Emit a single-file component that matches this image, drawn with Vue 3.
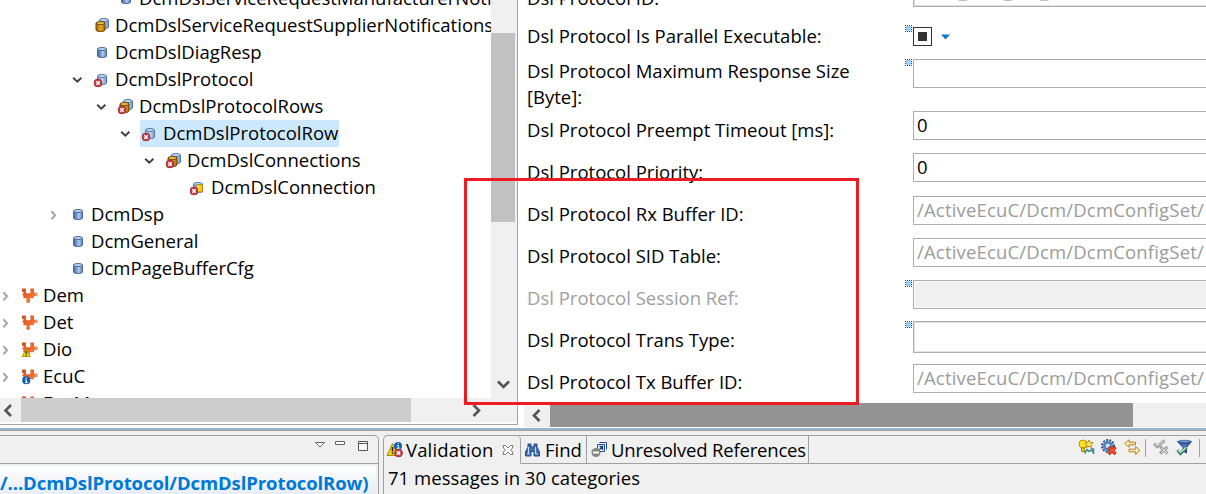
<script setup>
const tree = [
  { t: 139, icon: 'cyl', text: 'DcmDslServiceRequestManufacturerNotification' },
  { t: 115, icon: 'multi', text: 'DcmDslServiceRequestSupplierNotifications' },
  { t: 115, icon: 'cyl', text: 'DcmDslDiagResp' },
  { t: 115, icon: 'cyl-err', text: 'DcmDslProtocol', arrow: 'open' },
  { t: 139, icon: 'multi-err', text: 'DcmDslProtocolRows', arrow: 'open' },
  { t: 163, icon: 'cyl-err', text: 'DcmDslProtocolRow', arrow: 'open', sel: true },
  { t: 187, icon: 'multi-err', text: 'DcmDslConnections', arrow: 'open' },
  { t: 211, icon: 'choice-err', text: 'DcmDslConnection' },
  { t: 91, icon: 'cyl', text: 'DcmDsp', arrow: 'closed' },
  { t: 91, icon: 'cyl', text: 'DcmGeneral' },
  { t: 91, icon: 'cyl', text: 'DcmPageBufferCfg' },
  { t: 43, icon: 'puzzle', text: 'Dem', arrow: 'closed' },
  { t: 43, icon: 'puzzle', text: 'Det', arrow: 'closed' },
  { t: 43, icon: 'puzzle-warn', text: 'Dio', arrow: 'closed' },
  { t: 43, icon: 'puzzle-info', text: 'EcuC', arrow: 'closed' },
  { t: 43, icon: 'puzzle', text: 'EcuM', arrow: 'closed' },
]
const path = '/ActiveEcuC/Dcm/DcmConfigSet/'
const fields = [
  { label: 'Dsl Protocol ID:', kind: 'first combo', value: 'DCM_UDS_ON_CAN' },
  { label: 'Dsl Protocol Is Parallel Executable:', kind: 'check', mark: true },
  { label: 'Dsl Protocol Maximum Response Size [Byte]:', kind: 'tall', value: '', mark: true },
  { label: 'Dsl Protocol Preempt Timeout [ms]:', kind: 'plain', value: '0' },
  { label: 'Dsl Protocol Priority:', kind: 'plain', value: '0' },
  { label: 'Dsl Protocol Rx Buffer ID:', kind: 'ref', value: path },
  { label: 'Dsl Protocol SID Table:', kind: 'ref', value: path },
  { label: 'Dsl Protocol Session Ref:', kind: 'off', value: '', mark: true },
  { label: 'Dsl Protocol Trans Type:', kind: 'combo', value: '', mark: true },
  { label: 'Dsl Protocol Tx Buffer ID:', kind: 'ref', value: path },
]
</script>

<template>
  <div class="window">
    <svg class="defs" width="0" height="0">
      <defs>
        <linearGradient id="gb"><stop offset="0" stop-color="#3d619f" /><stop offset=".3" stop-color="#6f93c8" /><stop offset=".6" stop-color="#b4cdee" /><stop offset="1" stop-color="#5478b2" /></linearGradient>
        <linearGradient id="gl"><stop offset="0" stop-color="#7f9dcb" /><stop offset=".5" stop-color="#c3d7f1" /><stop offset="1" stop-color="#7896c6" /></linearGradient>
        <linearGradient id="gg"><stop offset="0" stop-color="#9a6404" /><stop offset=".5" stop-color="#e0a62c" /><stop offset="1" stop-color="#a87008" /></linearGradient>
        <linearGradient id="gp" x2="1" y2="1"><stop offset="0" stop-color="#c85426" /><stop offset=".45" stop-color="#ef6428" /><stop offset="1" stop-color="#e6a060" /></linearGradient>
        <linearGradient id="gf" x2="0" y2="1"><stop offset="0" stop-color="#1c3f87" /><stop offset=".5" stop-color="#5f8fd0" /><stop offset="1" stop-color="#24509c" /></linearGradient>
      </defs>
      <symbol id="body-blue" viewBox="0 0 10 11"><path d="M.5 2v7q0 1.500 4.500 1.500T9.500 9V2z" fill="url(#gb)" stroke="#486798" /><ellipse cx="5" cy="2" rx="4.500" ry="1.500" fill="#c4d6ee" stroke="#486798" /></symbol>
      <symbol id="body-light" viewBox="0 0 10 11"><path d="M.5 2v7q0 1.500 4.500 1.500T9.500 9V2z" fill="url(#gl)" stroke="#5673a8" /><ellipse cx="5" cy="2" rx="4.500" ry="1.500" fill="#bfe0f4" stroke="#5673a8" /></symbol>
      <symbol id="body-gold" viewBox="0 0 10 11"><path d="M.5 2v7q0 1.500 4.500 1.500T9.500 9V2z" fill="url(#gg)" stroke="#744600" /><ellipse cx="5" cy="2" rx="4.500" ry="1.500" fill="#efc25a" stroke="#744600" /></symbol>
      <symbol id="err" viewBox="0 0 9 9"><circle cx="4.500" cy="4.500" r="4" fill="#c24045" stroke="#a02c34" stroke-width=".8" /><path d="M2.800 2.800l3.400 3.400M6.200 2.800L2.800 6.200" stroke="#fff" stroke-width="1.500" /></symbol>
      <symbol id="cyl" viewBox="0 0 18 19"><use href="#body-blue" x="5" y="4" width="10" height="11" /></symbol>
      <symbol id="cyl-err" viewBox="0 0 18 19"><use href="#body-light" x="5" y="4" width="10" height="11" /><use href="#err" x="1.500" y="8.500" width="9" height="9" /></symbol>
      <symbol id="multi" viewBox="0 0 18 19"><use href="#body-light" x="7" y="2" width="10" height="11" /><use href="#body-gold" x="3" y="5" width="11" height="11" /></symbol>
      <symbol id="multi-err" viewBox="0 0 18 19"><use href="#multi" width="18" height="19" /><use href="#err" x="1.500" y="8.500" width="9" height="9" /></symbol>
      <symbol id="choice-err" viewBox="0 0 18 19"><use href="#body-light" x="5" y="4" width="10" height="11" /><path d="M9 6.500h5.500V14H9z" fill="#fbc90c" stroke="#b68a20" /><path d="M10 7v6" stroke="#fff2a0" /><use href="#err" x="1.500" y="8.500" width="9" height="9" /></symbol>
      <symbol id="puzzle" viewBox="0 0 18 19"><path d="M2 2.500h4v2.800q-.8 1.500.8 1.900h3q1.400-.4.600-1.900V2.500H14v4.300h1.200a1.800 1.800 0 1 1 0 3.200H14v2.200h-4.200v1.500a2 2 0 1 1-3.200 0v-1.500H3.400V9.500L2 8.500l2-1.800-2-.9z" fill="url(#gp)" /><circle cx="16.200" cy="8.400" r="1" fill="#f6bc7d" /></symbol>
      <symbol id="puzzle-warn" viewBox="0 0 18 19"><use href="#puzzle" width="18" height="19" /><path d="M6.200 9l4 7.500H2.200z" fill="#f8dc0a" stroke="#b99b00" /><path d="M6.200 11v2.800M6.200 14.500v1.200" stroke="#222" stroke-width="1.300" /></symbol>
      <symbol id="puzzle-info" viewBox="0 0 18 19"><use href="#puzzle" width="18" height="19" /><circle cx="6.200" cy="13.200" r="4" fill="#0c62b8" /><path d="M6.200 10.500v1.300M5 13h1.500v2.500M5 15.600h2.800" stroke="#fff" fill="none" /></symbol>
    </svg>

    <main class="upper">
      <section class="left">
        <div class="treerow">
          <div class="tree">
            <div v-for="(n, i) in tree" :key="i" class="node" :style="{ marginLeft: n.t - 46 + 'px' }">
              <svg class="arrow" width="16" height="16">
                <path v-if="n.arrow === 'open'" d="M4.200 5.700L8.300 9.600l4.100-3.900" class="open" />
                <path v-if="n.arrow === 'closed'" d="M6.400 4.200l3.700 4-3.700 4" class="closed" />
              </svg>
              <span class="item" :class="{ sel: n.sel }"><svg width="18" height="19"><use :href="'#' + n.icon" /></svg><span class="name">{{ n.text }}</span></span>
            </div>
          </div>
          <div class="vscroll">
            <div class="vthumb"></div>
            <svg width="24" height="28"><path d="M7 11.500l5.500 5.500 5.500-5.500" class="chev" /></svg>
          </div>
        </div>
        <div class="hscroll">
          <svg width="21" height="24"><path d="M11 7l-5.500 5.500 5.500 5.500" class="chev" /></svg>
          <div class="hthumb"></div>
          <svg class="toright" width="24" height="24"><path d="M7.500 7l5.500 5.500L7.500 18" class="chev" /></svg>
        </div>
      </section>

      <section class="right">
        <div class="form">
          <div v-for="(f, i) in fields" :key="i" class="field" :class="f.kind">
            <label>{{ f.label }}</label>
            <svg class="mark" width="8" height="8"><g v-if="f.mark"><path fill="#9ccff8" d="M1 1h5v5H1z" /><path fill="none" stroke="#0b4b91" stroke-dasharray="1 1" d="M0 .5h7M0 6.500h7M.5 0v7M6.500 0v7" /></g></svg>
            <div v-if="f.kind === 'check'" class="checkwrap">
              <span class="box"></span>
              <svg width="9" height="6"><path d="M0 .5h9L4.500 5.500z" fill="#0b78d4" /></svg>
            </div>
            <div v-else class="input">{{ f.value }}</div>
          </div>
        </div>
        <div class="formscroll">
          <svg width="26" height="24"><path d="M15.500 7L10 12.500l5.500 5.500" class="chev" /></svg>
          <div class="formthumb"></div>
        </div>
      </section>
      <div class="callout"></div>
    </main>

    <footer class="lower">
      <section class="view outline">
        <div class="bar">
          <svg width="56" height="20">
            <path d="M1.500 3.500h9L6 8z" fill="#fff" stroke="#666" />
            <path d="M21.500 2.500h9v3h-9z" fill="#fff" stroke="#666" />
            <path d="M44.500 2.500h9v9h-9zM44 4.500h10" fill="#fff" stroke="#555" />
          </svg>
        </div>
        <div class="crumb"><span class="crumbtext">/...DcmDslProtocol/DcmDslProtocolRow)</span></div>
      </section>
      <section class="view problems">
        <div class="tabs">
          <div class="tab active">
            <svg width="18" height="18"><path d="M6.500 2.500L12 14.500H1z" fill="#f9d616" stroke="#a98800" /><path d="M6.500 6v4.500M6.500 11.500v1.500" stroke="#222" stroke-width="1.600" /><circle cx="12" cy="5" r="4" fill="#0c62b8" /><path d="M12 2v1.200M11 4.500h1.300v2.800M10.700 7.300h3" stroke="#fff" fill="none" /><use href="#err" x="8" y="7.500" width="9" height="9" /></svg>
            <span class="t1">Validation</span>
            <svg class="close" width="12" height="12"><path d="M1 1.500h2.500L6 4l2.500-2.500H11L10.500 4l-2 2 2 2 .5 2.500H8.500L6 8l-2.500 2.500H1L1.500 8l2-2-2-2z" fill="#fff" stroke="#777" /></svg>
          </div>
          <div class="tab find">
            <svg width="16" height="16"><path d="M3 2h3v3h3V2h3v3l2.500 5v4H9V9.500H6V14H.5v-4L3 5z" fill="#3e68ad" stroke="#294d8b" /><path d="M3.500 5v7M10.500 5v7M2 12h2.500M10.500 12H13" stroke="#c6dcf5" stroke-width="1.200" /></svg>
            <span class="t2">Find</span>
          </div>
          <div class="tab unres">
            <svg width="17" height="17"><path d="M8.500 1.500h7v7" fill="none" stroke="#1d4ca0" /><path d="M6.500 3.500h7v7h-7z" fill="#f5faff" stroke="#1d4ca0" /><path d="M8 9l3.500-3.500M8.500 5.500h3V9" fill="none" stroke="#163c92" stroke-width="1.300" /><circle cx="5" cy="11.500" r="4.500" fill="#858585" /><path d="M2 11.500h6" stroke="#fff" stroke-width="2" /></svg>
            <span class="t3">Unresolved References</span>
          </div>
          <div class="tools">
            <svg width="17" height="17"><circle cx="5" cy="5" r="4" fill="#ffe11c" stroke="#c09500" /><path d="M3.500 9h3v3.500h-3z" fill="#f2cf45" stroke="#a57d00" /><path d="M11 1l1.200 2.500 2.800.3-2 2 .5 2.700-2.500-1.300L8.500 8.500 9 6 7 4l2.800-.5z" fill="#fbe77a" stroke="#b98b00" /><path d="M6.500 14.500L9 10.500l2 2q4-3 4.500 2.500v-5h-3" fill="none" stroke="#388c88" stroke-width="1.500" /></svg>
            <svg width="17" height="17"><circle cx="7" cy="7" r="6" fill="none" stroke="#31568e" stroke-width="2" stroke-dasharray="2 1.200" /><circle cx="7" cy="7" r="3.700" fill="#d6e7fa" stroke="#5a86bf" stroke-width="3" /><path d="M7.500 8l7 7M14.500 8l-7 7" stroke="#9e1f08" stroke-width="3.400" /><path d="M8 8.500l6 6M14 8.500l-6 6" stroke="#ff5428" stroke-width="1.900" /></svg>
            <svg width="17" height="17"><path d="M.7 4.500L5 .8v2.400h6.500v2.600H5v2.400z" fill="#fff3c4" stroke="#bd7b13" /><path d="M16 11.500l-4.300-3.800v2.500H5v2.600h6.700v2.500z" fill="#fff3c4" stroke="#bd7b13" /></svg>
            <i class="sep"></i>
            <svg class="gray" width="17" height="17"><path d="M1 4.500l3 3 7.500-6" fill="none" stroke="#999" stroke-width="3" /><path d="M1.500 4.700l2.500 2L10.500 2" fill="none" stroke="#eee" /><path d="M7 7.500l7.500 7M14.500 8l-7.500 6.500" stroke="#999" stroke-width="3" /><path d="M8 8.500l6 5.500M14 8.500L8 14" stroke="#eee" /></svg>
            <svg class="filter" width="17" height="17"><path d="M1.500 2.500h14L10.500 8.500V14L7 12V8.500z" fill="url(#gf)" stroke="#234681" /><ellipse cx="8.500" cy="2.500" rx="6.500" ry="1.200" fill="#7fa5da" stroke="#234681" stroke-width=".7" /><path d="M1.500 11l3 3.500 6-6" fill="none" stroke="#357b62" stroke-width="3" /><path d="M2 11l2.500 2.500L10 8.500" fill="none" stroke="#c9eed7" stroke-width="1.200" /></svg>
            <i class="sep last"></i>
          </div>
        </div>
        <div class="summary">71 messages in 30 categories</div>
      </section>
    </footer>
  </div>
</template>

<style>
body { margin: 0; overflow: hidden; }
</style>

<style scoped>
* { box-sizing: border-box; }
.window { width: 1206px; height: 494px; overflow: hidden; background: #f0f0f0; font-family: "Open Sans", "Noto Sans", sans-serif; font-size: 18.500px; color: #000; white-space: nowrap; }
.defs { position: absolute; }
svg { flex: none; display: block; }
.chev { fill: none; stroke: #555; stroke-width: 2.600; }
.upper { position: relative; height: 431px; display: flex; background: #fff; border-bottom: 1px solid #a0a0a0; box-shadow: inset 0 -2px #99b4d1; }
.left { width: 518px; height: 425px; flex: none; border-right: 1px solid #a4a5ab; border-bottom: 1px solid #a4a5ab; }
.treerow { display: flex; height: 398px; background: #f0f0f0; }
.tree { width: 491px; height: 398px; overflow: hidden; background: #fff; }
.node { height: 27px; display: flex; align-items: center; gap: 7px; }
.node:first-child { margin-top: -15px; }
.open { fill: none; stroke: #404040; stroke-width: 2; }
.closed { fill: none; stroke: #a6a6a6; stroke-width: 2; }
.item { display: flex; align-items: center; height: 27px; padding-right: 1px; }
.item.sel { background: #cce8ff; }
.name { margin-left: 5px; line-height: 25px; padding-bottom: 2px; }
.vscroll { width: 24px; height: 398px; background: #f0f0f0; display: flex; flex-direction: column; justify-content: space-between; padding-top: 33px; }
.vthumb { height: 189px; background: #c1c1c1; }
.hscroll { height: 24px; background: #f0f0f0; display: flex; }
.hthumb { width: 390px; background: #cdcdcd; }
.toright { margin-left: 55px; }
.right { flex: 1; min-width: 0; padding-left: 6px; }
.form { height: 403px; overflow: hidden; padding-left: 3px; }
.field { height: 42px; display: flex; align-items: flex-start; }
.field label { width: 374px; flex: none; line-height: 26px; padding: 8px 20px 0 0; }
.mark { margin: 0 0 0 4px; }
.input { width: 330px; height: 29px; flex: none; margin: 2px 0 0; border: 1px solid #abadb3; padding-left: 3px; line-height: 25px; background: #fff; }
.field.first { height: 15px; align-items: flex-end; }
.first label { height: 34px; padding: 0; margin-bottom: -6px; line-height: 22px; }
.field.check { height: 40px; }
.field.check .mark { margin-top: 10px; }
.checkwrap { display: flex; align-items: center; gap: 9px; margin: 12px 0 0; }
.box { width: 19px; height: 19px; border: 1px solid #333; background: #333; box-shadow: inset 0 0 0 4px #fff; }
.field.tall { height: 54px; }
.tall label { padding-top: 3px; white-space: normal; }
.tall .input, .tall .mark { margin-top: 4px; }
.ref .input, .off .input { margin-top: 3px; }
.ref .input { color: #9b9b9b; letter-spacing: .18px; }
.off label { color: #a0a0a0; }
.off .input { background: #f0f0f0; box-shadow: inset 0 0 0 1px #fff; }
.off .mark { margin-top: 3px; }
.combo .input { height: 32px; box-shadow: inset 0 0 0 1px #e3e3e3; }
.first .input { margin-bottom: 8px; line-height: 27px; }
.combo .mark { margin-top: 2px; }
.formscroll { display: flex; height: 24px; background: #f0f0f0; }
.formthumb { width: 583px; background: #939393; }
.callout { position: absolute; left: 464px; top: 178px; width: 395px; height: 227px; border: 3px solid #ed1c24; }
.lower { display: flex; gap: 4px; padding-top: 4px; height: 63px; }
.view { border: 1px solid #a0a0a0; border-bottom: 0; }
.outline { width: 379px; flex: none; border-left: 0; border-top-right-radius: 5px; }
.bar { height: 28px; border-bottom: 1px solid #a0a0a0; display: flex; justify-content: flex-end; padding: 3px 8px 0 0; }
.crumb { height: 31px; margin: 2px 2px 0 0; background: linear-gradient(#fff, #e4eaf5); color: #0078d7; font-weight: 700; line-height: 34px; letter-spacing: -.09px; }
.problems { flex: 1; min-width: 0; border-right: 0; border-top-left-radius: 5px; }
.tabs { display: flex; height: 28px; }
.tab { display: flex; align-items: center; border-right: 1px solid #a0a0a0; border-bottom: 1px solid #a0a0a0; }
.active { width: 137px; padding-left: 3px; border-bottom-color: transparent; border-top-right-radius: 4px; }
.active > svg:first-child { margin-left: -1px; }
.t1 { margin-left: 2px; letter-spacing: .15px; }
.close { margin-left: 8px; }
.find { width: 66px; padding-left: 4px; gap: 4px; }
.unres { width: 222px; padding-left: 4px; gap: 3px; }
.t3 { letter-spacing: -.19px; }
.tools { flex: 1; border-bottom: 1px solid #a0a0a0; display: flex; align-items: flex-start; padding: 3px 0 0 269px; gap: 6px; }
.sep { width: 1px; height: 18px; background: #a0a0a0; margin-left: -2px; }
.gray { margin-left: 1px; }
.sep.last { margin-left: 0; }
.summary { padding-left: 4px; line-height: 28px; letter-spacing: .04px; }
</style>
